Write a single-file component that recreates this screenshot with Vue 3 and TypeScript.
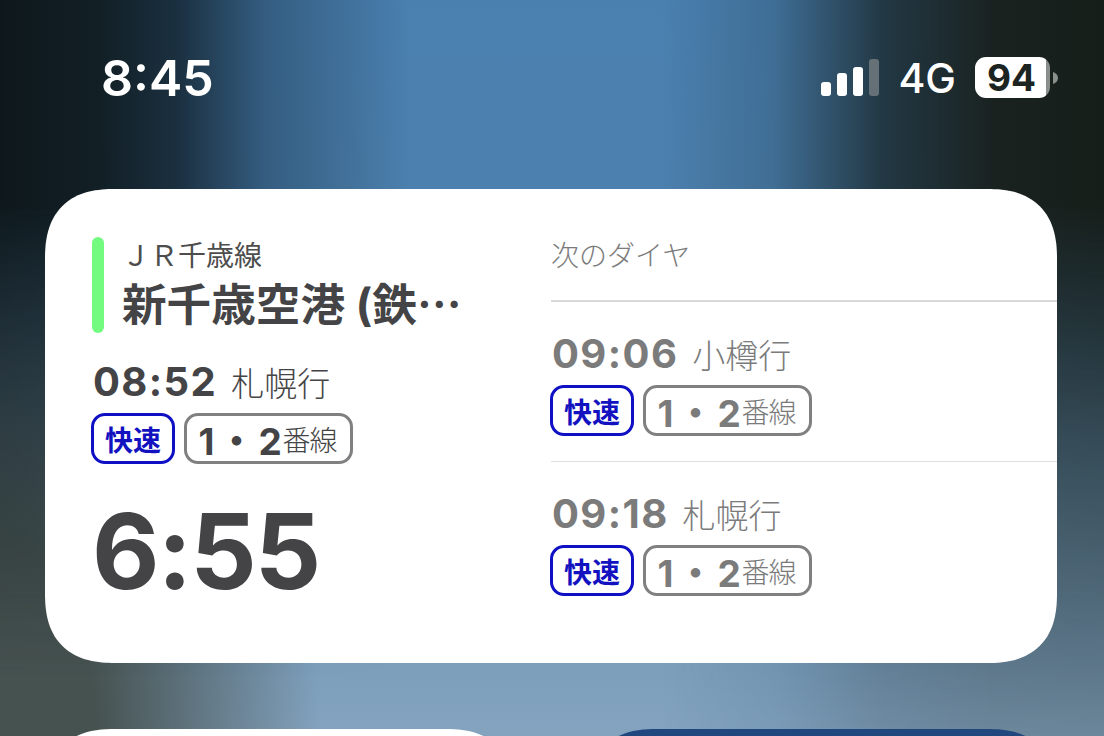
<template>
  <div class="screen">
    <header class="status">
      <span class="clock">8:45</span>
      <div class="status-right">
        <div class="signal">
          <i class="b1"></i><i class="b2"></i><i class="b3"></i><i class="b4"></i>
        </div>
        <span class="net">4G</span>
        <div class="battery">
          <div class="battery-body">94</div>
          <svg class="battery-cap" width="5" height="12" viewBox="0 0 5 12"><path d="M0 0c3 1 5 3 5 6s-2 5-5 6z" fill="#8b8f8c" /></svg>
        </div>
      </div>
    </header>

    <section class="widget">
      <div class="col-left">
        <div class="station">
          <div class="line-bar"></div>
          <div class="station-text">
            <div class="line-name">ＪＲ千歳線</div>
            <div class="station-name">新千歳空港 (鉄<span class="dots">…</span></div>
          </div>
        </div>
        <div class="train-row">
          <span class="time">08:52</span>
          <span class="dest">札幌行</span>
        </div>
        <div class="tags">
          <span class="tag-type">快速</span>
          <span class="tag-plat"><b>1・2</b>番線</span>
        </div>
        <div class="countdown">6:55</div>
      </div>

      <div class="col-right">
        <div class="next-title">次のダイヤ</div>
        <div v-for="t in nextTrains" :key="t.time" class="next-row">
          <div class="train-row">
            <span class="time">{{ t.time }}</span>
            <span class="dest">{{ t.dest }}</span>
          </div>
          <div class="tags">
            <span class="tag-type">快速</span>
            <span class="tag-plat"><b>1・2</b>番線</span>
          </div>
        </div>
      </div>
    </section>

    <div class="bottom">
      <div class="small-card white"></div>
      <div class="small-card navy"></div>
    </div>
  </div>
</template>

<script setup lang="ts">
const nextTrains = [
  { time: '09:06', dest: '小樽行' },
  { time: '09:18', dest: '札幌行' },
];
</script>

<style>
html, body {
  margin: 0;
  background: #0f1a1c;
  overflow: hidden;
}
</style>

<style scoped>
.screen {
  position: relative;
  width: 1104px;
  height: 736px;
  overflow: hidden;
  box-sizing: border-box;
  padding: 0 47px 0 45px;
  font-family: Inter, "Noto Sans CJK JP", sans-serif;
  background:
    radial-gradient(ellipse 320px 640px at 0 736px, #465250 30%, rgba(70, 82, 80, 0) 100%),
    linear-gradient(180deg, #4a80b0 0%, #4d80ad 35%, #6d95b4 70%, #84a3bf 100%);
}
/* wallpaper: dark falloff on both sides, stronger at the top */
.screen::before,
.screen::after {
  content: "";
  position: absolute;
  inset: 0;
  pointer-events: none;
}
.screen::before {
  background: linear-gradient(90deg, #0e181c 0%, #121f25 9%, rgba(20, 36, 48, 0.88) 16%, rgba(34, 64, 90, 0.55) 24%, rgba(74, 128, 176, 0) 37%);
  -webkit-mask-image: linear-gradient(180deg, #000 0%, #000 28%, rgba(0, 0, 0, 0.5) 58%, rgba(0, 0, 0, 0) 92%);
  mask-image: linear-gradient(180deg, #000 0%, #000 28%, rgba(0, 0, 0, 0.5) 58%, rgba(0, 0, 0, 0) 92%);
}
.screen::after {
  background: linear-gradient(270deg, #161e1a 0%, #1a2220 10%, rgba(30, 48, 56, 0.9) 20%, rgba(50, 88, 118, 0.45) 30%, rgba(74, 128, 176, 0) 40%);
  -webkit-mask-image: linear-gradient(180deg, #000 0%, #000 28%, rgba(0, 0, 0, 0.6) 60%, rgba(0, 0, 0, 0.22) 100%);
  mask-image: linear-gradient(180deg, #000 0%, #000 28%, rgba(0, 0, 0, 0.6) 60%, rgba(0, 0, 0, 0.22) 100%);
}

.status {
  position: relative;
  z-index: 1;
  height: 189px;
  display: flex;
  justify-content: space-between;
  align-items: flex-start;
  color: #fff;
}
.clock {
  margin: 47px 0 0 56px;
  font-size: 50px;
  line-height: 62px;
  font-weight: 600;
}
.status-right {
  margin-top: 57px;
  margin-right: -1px;
  display: flex;
  align-items: center;
  gap: 19px;
  height: 41px;
}
.signal {
  display: flex;
  align-items: flex-end;
  gap: 6px;
  height: 37px;
}
.signal i {
  display: block;
  width: 10px;
  border-radius: 3px;
  background: #fff;
}
.signal .b1 { height: 14px; }
.signal .b2 { height: 23px; }
.signal .b3 { height: 29px; }
.signal .b4 { height: 37px; background: #667077; }
.net {
  font-size: 41px;
  line-height: 41px;
  font-weight: 500;
  margin-top: 2px;
}
.battery {
  display: flex;
  align-items: center;
  gap: 3px;
}
.battery-body {
  width: 75px;
  height: 41px;
  border-radius: 11px;
  background: linear-gradient(90deg, #fff 95%, #8b8f8c 95%);
  color: #1c2422;
  font-size: 37px;
  line-height: 41px;
  font-weight: 700;
  text-align: center;
  padding-right: 2px;
  box-sizing: border-box;
}
.battery-cap {
  display: block;
}

.widget {
  position: relative;
  z-index: 1;
  height: 474px;
  box-sizing: border-box;
  background: #fff;
  border-radius: 70px;
  corner-shape: superellipse(1.3);
  display: flex;
  overflow: hidden;
  color: #444446;
}

.col-left {
  width: 506px;
  flex: none;
  box-sizing: border-box;
  padding: 48px 0 0 47px;
}
.station {
  display: flex;
  gap: 18px;
  height: 96px;
}
.line-bar {
  width: 12px;
  border-radius: 6px;
  background: #73fb7f;
}
.line-name {
  font-size: 28px;
  line-height: 36px;
  margin-top: 1px;
  color: #4d4d4d;
}
.station-name {
  font-size: 44.6px;
  line-height: 50px;
  font-weight: 700;
  white-space: nowrap;
  margin-top: 3px;
}
.dots {
  font-family: "Noto Sans CJK JP", sans-serif;
}

.train-row {
  display: flex;
  align-items: baseline;
  gap: 14px;
  height: 46px;
  white-space: nowrap;
}
.col-left .train-row {
  margin-top: 26px;
  padding-left: 1px;
}
.time {
  font-size: 40px;
  line-height: 46px;
  font-weight: 700;
  letter-spacing: 1.4px;
}
.dest {
  font-size: 33px;
  line-height: 46px;
  font-weight: 300;
}

.tags {
  display: flex;
  gap: 9px;
  margin-top: 8px;
  margin-left: -1px;
  height: 51px;
}
.tag-type,
.tag-plat {
  display: flex;
  align-items: center;
  justify-content: center;
  box-sizing: border-box;
  height: 51px;
  border-radius: 14px;
  background: #fff;
}
.tag-type {
  width: 84px;
  border: 3px solid #0f10c4;
  color: #1212c0;
  font-size: 28px;
  font-weight: 700;
}
.tag-plat {
  width: 169px;
  border: 3px solid #808080;
  padding-right: 2px;
  font-size: 28px;
  font-weight: 300;
  letter-spacing: -1px;
}
.tag-plat b {
  font-size: 37px;
  font-weight: 700;
  margin-right: -3px;
  letter-spacing: 3.5px;
}

.countdown {
  margin-top: 20px;
  font-size: 104px;
  line-height: 134px;
  font-weight: 700;
  letter-spacing: -2px;
}

.col-right {
  flex: 1;
  color: #7b7b7b;
}
.next-title {
  height: 113px;
  box-sizing: border-box;
  padding-top: 47px;
  font-size: 28px;
  line-height: 40px;
  font-weight: 300;
  border-bottom: 2px solid #d9d9d9;
}
.next-row {
  height: 160px;
  box-sizing: border-box;
  padding-top: 29px;
  border-bottom: 1px solid #dedede;
}
.next-row:last-child {
  border-bottom: 0;
}
.col-right .train-row {
  padding-left: 1px;
}

.bottom {
  position: relative;
  z-index: 1;
  display: flex;
  gap: 72px;
  margin-top: 66px;
}
.small-card {
  width: 470px;
  height: 450px;
  border-radius: 70px;
  corner-shape: superellipse(1.3);
}
.small-card.white {
  background: #fff;
}
.small-card.navy {
  background: #21477f;
}
</style>
